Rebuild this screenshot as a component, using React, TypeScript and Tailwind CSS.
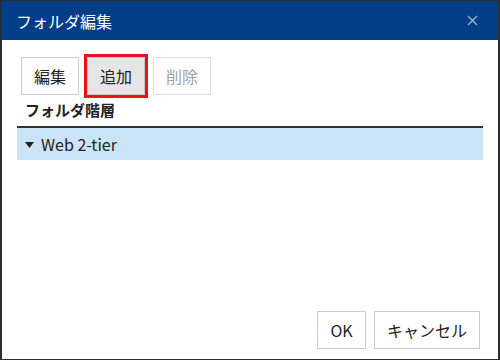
import React from "react";

const font = { fontFamily: '"Noto Sans CJK JP", "Noto Sans", sans-serif' };

function Btn({
  label,
  disabled,
  active,
  className = "",
}: {
  label: string;
  disabled?: boolean;
  active?: boolean;
  className?: string;
}) {
  return (
    <button
      type="button"
      disabled={disabled}
      className={
        "h-[38px] border text-[16px] leading-none " +
        (active
          ? "bg-[#e6e6e6] border-[#c8c8c8] text-[#222] outline-[3px] outline-solid outline-[#e8141c] "
          : disabled
          ? "bg-white border-[#dcdcdc] text-[#a0a0a0] "
          : "bg-white border-[#cccccc] text-[#222] ") +
        className
      }
    >
      {label}
    </button>
  );
}

export default function App() {
  return (
    <div
      className="w-[500px] h-[360px] bg-[#2e2e2e] pl-[2px] pr-[2px] pt-[1px] pb-[1px]"
      style={font}
    >
      <div className="flex flex-col h-full bg-white">
        <div className="flex items-center justify-between h-[39px] bg-[#003f87] pl-[14px] pr-[20px]">
          <span className="text-white text-[16px]">フォルダ編集</span>
          <svg width="11" height="11" viewBox="0 0 11 11">
            <path d="M1 1L10 10M10 1L1 10" stroke="#9fb4d4" strokeWidth="1.4" />
          </svg>
        </div>

        <div className="flex-1 flex flex-col px-[15px]">
          <div className="flex gap-[8px] pl-[4px] pt-[17px]">
            <Btn label="編集" className="w-[58px]" />
            <Btn label="追加" active className="w-[58px]" />
            <Btn label="削除" disabled className="w-[58px]" />
          </div>

          <div className="pl-[8px] pt-[2px] pb-[4px] font-bold text-[15px] text-[#222] leading-[25px]">
            フォルダ階層
          </div>
          <div className="border-t-2 border-[#333]">
            <div className="flex items-center h-[32px] bg-[#cce4f7] pl-[8px] text-[16px] text-[#222]">
              <svg width="9" height="6" viewBox="0 0 9 6" className="mr-[7px] mt-[1px]">
                <path d="M0 0H9L4.5 6Z" fill="#222" />
              </svg>
              Web 2-tier
            </div>
          </div>

          <div className="flex-1" />

          <div className="flex justify-end gap-[8px] pr-[3px] pb-[10px]">
            <Btn label="OK" className="w-[49px] h-[37px]" />
            <Btn label="キャンセル" className="w-[106px] h-[37px]" />
          </div>
        </div>
      </div>
    </div>
  );
}
